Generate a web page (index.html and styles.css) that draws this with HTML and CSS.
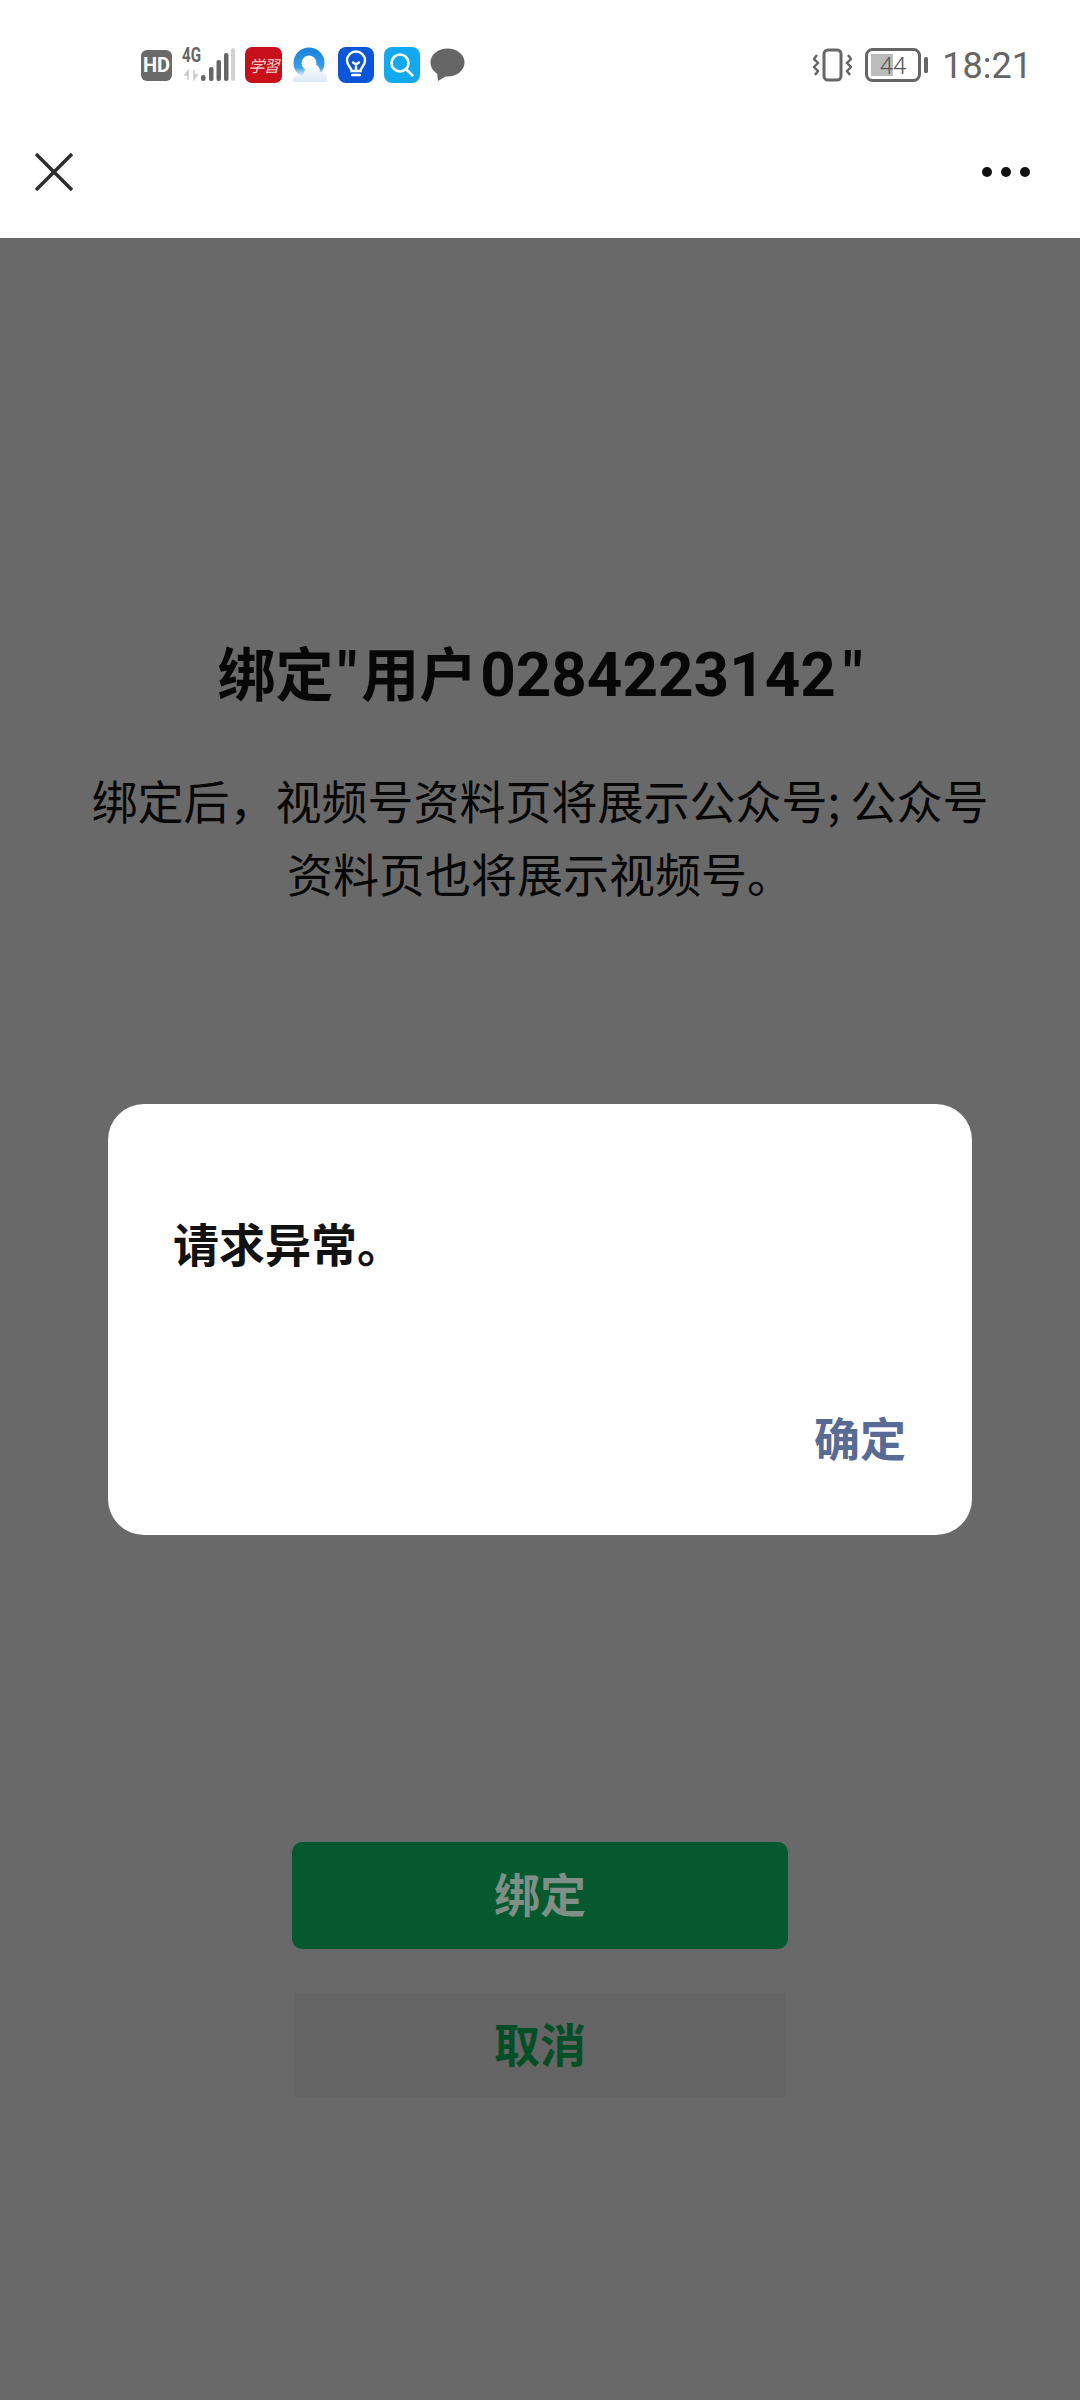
FILE: index.html
```html
<!DOCTYPE html>
<html lang="zh-CN">
<head>
  <meta charset="UTF-8">
  <meta name="viewport" content="width=device-width, initial-scale=1.0">
  <title>绑定</title>
  <link rel="stylesheet" href="styles.css">
</head>
<body>
  <!-- Barra de status -->
  <div class="status-bar">
    <div class="status-left">
      <span class="hd-badge">HD</span>
      <svg class="icon-signal" viewBox="0 -6 53 48" width="53" height="48">
        <text x="0" y="15" class="signal-label" textLength="19" lengthAdjust="spacingAndGlyphs">4G</text>
        <path d="M6 33v-9l-3 4h3M12 23v9l3-4h-3" fill="#c8c8c8" stroke="#c8c8c8" stroke-width="1.5"/>
        <rect x="19" y="28" width="4.5" height="6" rx="2.2" fill="#666"/>
        <rect x="27" y="20" width="4.5" height="14" rx="2" fill="#666"/>
        <rect x="34.500" y="13" width="4.5" height="21" rx="2" fill="#666"/>
        <rect x="42" y="6" width="4.5" height="28" rx="2" fill="#666"/>
        <rect x="49" y="1" width="4" height="33" rx="2" fill="#d2d2d2"/>
      </svg>
      <span class="app-red">学習</span>
      <svg class="app-icon" viewBox="0 0 36 36" width="36" height="36">
        <defs>
          <linearGradient id="ringGrad" x1="0" y1="0" x2="0" y2="1">
            <stop offset="0" stop-color="#1c86de"/>
            <stop offset="0.7" stop-color="#3a9ee6"/>
            <stop offset="1" stop-color="#cfe6f7"/>
          </linearGradient>
          <linearGradient id="cloudGrad" x1="0" y1="0" x2="0" y2="1">
            <stop offset="0" stop-color="#ffffff"/>
            <stop offset="1" stop-color="#dbe9f5"/>
          </linearGradient>
        </defs>
        <circle cx="17" cy="16" r="11.500" fill="none" stroke="url(#ringGrad)" stroke-width="8"/>
        <path d="M1 35c-1-2 0-5 3-6 2-1 5-1 7 0 1-7 5-12 10-12s7 4 7 8c4-1 7 2 7 6 0 2 0 3-1 4z" fill="url(#cloudGrad)"/>
      </svg>
      <svg class="app-icon" viewBox="0 0 36 36" width="36" height="36">
        <rect width="36" height="36" rx="8" fill="#0b55d8"/>
        <path d="M13.500 24c0-4-4.500-5-4.500-10.500a9 9 0 0 1 18 0C27 19 22.500 20 22.500 24z" fill="none" stroke="#fff" stroke-width="2.4"/>
        <path d="M18 24v-7M15 15.500l3 2 3-2M14 28h8" fill="none" stroke="#fff" stroke-width="2.400" stroke-linecap="round"/>
      </svg>
      <svg class="app-icon" viewBox="0 0 36 36" width="36" height="36">
        <rect width="36" height="36" rx="8" fill="#12a9f0"/>
        <circle cx="16" cy="16" r="8.500" fill="none" stroke="#fff" stroke-width="2.600"/>
        <path d="M22.500 22.500l6 6" stroke="#fff" stroke-width="2.600" stroke-linecap="round"/>
      </svg>
      <svg class="app-icon" viewBox="0 0 35 34" width="35" height="34">
        <ellipse cx="17.500" cy="14.500" rx="17" ry="14" fill="#666"/>
        <path d="M7 24l1 9 10-6z" fill="#666"/>
      </svg>
    </div>
    <div class="status-right">
      <svg viewBox="0 0 39 34" width="39" height="34">
        <rect x="11" y="2" width="17" height="30" rx="4" fill="none" stroke="#666" stroke-width="3"/>
        <path d="M4 7l-3 4 4 4-4 4 4 4-3 4M35 7l3 4-4 4 4 4-4 4 3 4" fill="none" stroke="#666" stroke-width="2.400"/>
      </svg>
      <svg class="icon-battery" viewBox="0 0 64 34" width="64" height="34">
        <rect x="6" y="6" width="22" height="22" fill="#bcbcbc"/>
        <rect x="1.500" y="1.500" width="53" height="31" rx="6" fill="none" stroke="#666" stroke-width="3"/>
        <rect x="59" y="9" width="4" height="16" rx="1.500" fill="#666"/>
        <text x="28" y="26" class="battery-label">44</text>
      </svg>
      <span class="clock">18:21</span>
    </div>
  </div>

  <!-- Barra de navegacao -->
  <div class="nav-bar">
    <svg viewBox="0 0 38 38" width="38" height="38">
      <path d="M1 1l36 36M37 1L1 37" stroke="#2e2e2e" stroke-width="3.500"/>
    </svg>
    <div class="nav-more">
      <span class="dot"></span>
      <span class="dot"></span>
      <span class="dot"></span>
    </div>
  </div>

  <div class="content">
    <h1 class="bind-title">绑定<span class="latin quote-open">"</span>用户<span class="latin digits">0284223142</span><span class="latin quote-close">"</span></h1>
    <p class="bind-desc">绑定后，视频号资料页将展示公众号; 公众号<br>资料页也将展示视频号。</p>
    <button class="btn btn-primary"><span class="btn-primary-label">绑定</span></button>
    <button class="btn btn-cancel">取消</button>

    <!-- Modal de erro -->
    <div class="modal-overlay">
      <div class="modal-content">
        <p class="modal-text">请求异常。</p>
        <div class="modal-ok">确定</div>
      </div>
    </div>
  </div>
</body>
</html>
```

FILE: styles.css
```css
html, body {
  margin: 0;
  padding: 0;
}

body {
  width: 1080px;
  height: 2400px;
  display: flex;
  flex-direction: column;
  background-color: #fff;
  font-family: "Noto Sans CJK SC", "Noto Sans", sans-serif;
  overflow: hidden;
}

/* Barra de status */
.status-bar {
  height: 70px;
  padding: 30px 48px 0 141px;
  display: flex;
  justify-content: space-between;
  align-items: center;
}

.status-left {
  display: flex;
  align-items: center;
  gap: 10px;
}

.status-right {
  display: flex;
  align-items: center;
  gap: 13px;
}

.hd-badge {
  width: 31px;
  height: 31px;
  background-color: #6a6a6a;
  border-radius: 6px;
  color: #fff;
  font-family: Roboto, sans-serif;
  font-size: 20px;
  font-weight: 700;
  line-height: 31px;
  text-align: center;
}

.signal-label {
  font-family: Roboto, sans-serif;
  font-size: 21px;
  font-weight: 700;
  fill: #666;
}

.app-red {
  width: 37px;
  height: 36px;
  background-color: #c8101a;
  border-radius: 7px;
  color: #f6d4d4;
  font-family: "Noto Sans CJK JP", sans-serif;
  font-size: 16px;
  font-style: italic;
  letter-spacing: -1px;
  line-height: 36px;
  text-align: center;
  white-space: nowrap;
}

.battery-label {
  font-family: Roboto, sans-serif;
  font-size: 24px;
  font-weight: 300;
  fill: #555;
  text-anchor: middle;
}

.clock {
  margin-top: 2px;
  color: #666;
  font-family: Roboto, sans-serif;
  font-size: 36px;
  line-height: 40px;
}

/* Barra de navegacao */
.nav-bar {
  height: 132px;
  padding: 6px 50px 0 35px;
  display: flex;
  justify-content: space-between;
  align-items: center;
}

.nav-more {
  display: flex;
  gap: 9px;
}

.dot {
  width: 10px;
  height: 10px;
  background-color: #111;
  border-radius: 50%;
}

/* Conteudo */
.content {
  position: relative;
  flex: 1;
  padding-top: 393px;
  display: flex;
  flex-direction: column;
  align-items: center;
  background-color: #fff;
}

.bind-title {
  margin: 0;
  color: #111;
  font-size: 58px;
  font-weight: 700;
  line-height: 80px;
}

.bind-title .latin {
  font-family: Roboto, sans-serif;
  font-size: 62px;
}

.quote-open {
  padding: 0 4px;
}

.digits {
  padding-left: 3px;
}

.quote-close {
  padding-left: 7px;
}

.bind-desc {
  margin: 48px 0 0 0;
  color: #111;
  font-size: 46px;
  line-height: 73px;
  text-align: center;
}

.btn {
  display: block;
  border: none;
  font-family: inherit;
  font-size: 46px;
  font-weight: 700;
}

.btn-primary {
  width: 496px;
  height: 107px;
  margin-top: 933px;
  padding: 0 0 7px 0;
  background-color: #10d870;
  border-radius: 10px;
}

/* Fica acima do fundo escuro, como no original */
.btn-primary-label {
  position: relative;
  z-index: 2;
  color: #7f8f86;
}

.btn-cancel {
  width: 490px;
  height: 104px;
  margin-top: 45px;
  padding: 0 0 9px 0;
  background-color: #f2f2f2;
  color: #07c160;
}

/* Fundo escuro */
.modal-overlay {
  position: absolute;
  top: 0;
  left: 0;
  width: 100%;
  height: 100%;
  background-color: rgba(0, 0, 0, 0.59);
  display: flex;
  justify-content: center;
  align-items: center;
}

.modal-content {
  box-sizing: border-box;
  width: 864px;
  height: 431px;
  padding: 98px 66px 59px 65px;
  background-color: #fff;
  border-radius: 36px;
  display: flex;
  flex-direction: column;
  justify-content: space-between;
}

.modal-text {
  margin: 0;
  color: #111;
  font-size: 46px;
  font-weight: 700;
  line-height: 80px;
}

.modal-ok {
  align-self: flex-end;
  color: #576b95;
  font-size: 46px;
  font-weight: 700;
  line-height: 80px;
}
```
